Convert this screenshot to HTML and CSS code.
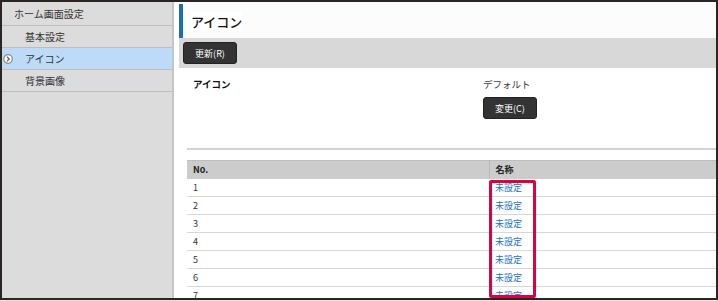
FILE: index.html
```html
<!DOCTYPE html>
<html lang="ja">
<head>
<meta charset="utf-8">
<link rel="stylesheet" href="styles.css">
</head>
<body>
<div class="frame">
  <aside class="side">
    <div class="side-head">ホーム画面設定</div>
    <div class="side-item">基本設定</div>
    <div class="side-item active">
      <svg class="side-icon" width="10" height="10" viewBox="0 0 10 10"><circle cx="5" cy="5" r="4.3" fill="#fff" stroke="#8a8a8a" stroke-width="1.2"/><path d="M4 2.8 L6.2 5 L4 7.2" fill="none" stroke="#6a6a6a" stroke-width="1.4"/></svg>
      アイコン
    </div>
    <div class="side-item">背景画像</div>
  </aside>
  <main class="main">
    <div class="title"><span class="title-text">アイコン</span></div>
    <div class="toolbar"><button class="btn">更新(R)</button></div>
    <section class="setting">
      <div class="label">アイコン</div>
      <div class="value">
        <div class="value-text">デフォルト</div>
        <button class="btn">変更(C)</button>
      </div>
    </section>
    <div class="rule"></div>
    <div class="table-wrap">
      <table class="list">
        <thead><tr><th class="c-no">No.</th><th>名称</th></tr></thead>
        <tbody>
          <tr><td>1</td><td><a>未設定</a></td></tr>
          <tr><td>2</td><td><a>未設定</a></td></tr>
          <tr><td>3</td><td><a>未設定</a></td></tr>
          <tr><td>4</td><td><a>未設定</a></td></tr>
          <tr><td>5</td><td><a>未設定</a></td></tr>
          <tr><td>6</td><td><a>未設定</a></td></tr>
          <tr><td>7</td><td><a>未設定</a></td></tr>
        </tbody>
      </table>
      <div class="highlight"></div>
    </div>
  </main>
</div>
</body>
</html>
```
FILE: styles.css
```css
* { box-sizing: border-box; }
html, body { margin: 0; padding: 0; background: #e6e3e1; }
body { font-family: "Noto Sans CJK JP", "Noto Sans", sans-serif; color: #222; }
.frame {
  width: 718px; height: 300px;
  border: 2px solid #2b2523;
  display: flex;
  overflow: hidden;
  background: #fff;
}
.side {
  width: 172px; flex: none;
  background: #dcdcdc;
  border-right: 2px solid #c6c6c6;
}
.side-head, .side-item {
  height: 22px;
  display: flex; align-items: center;
  font-size: 10px;
  color: #333;
  border-bottom: 1px solid #bdbdbd;
}
.side-head { padding-left: 12px; height: 24px; }
.side-item { padding-left: 23px; position: relative; }
.side-item.active { background: #bddbf8; }
.side-icon { position: absolute; left: 1px; top: 6px; }
.main { flex: 1; padding: 2px 0 0 5px; display: flex; flex-direction: column; min-width: 0; }
.main > * { flex: none; }
.title {
  height: 34px;
  border-left: 4px solid #1a6db5;
  background: #fcfcfc;
  display: flex; align-items: center;
  padding-left: 8px;
}
.title-text { font-size: 13px; font-weight: 500; color: #111; background: #fff; }
.toolbar {
  height: 30px;
  background: #d8d8d8;
  display: flex; align-items: center;
  padding-left: 4px;
}
.btn {
  font-family: inherit;
  font-size: 9px;
  color: #fff;
  background: #333;
  border: 1px solid #222;
  border-radius: 3px;
  width: 54px; height: 22px;
  padding: 0;
}
.setting { display: flex; padding: 9px 0 0 14px; height: 80px; line-height: 14px; }
.label { width: 290px; font-size: 9.5px; font-weight: 700; color: #111; }
.value-text { font-size: 9.5px; color: #3a3a3a; margin-bottom: 6px; }
.rule { margin-left: 8px; height: 2px; background: #d3d3d3; }
.table-wrap { position: relative; margin: 10px 0 0 8px; }
.list { width: 100%; border-collapse: collapse; font-size: 9px; }
.list th {
  background: #cccccc; height: 18px; text-align: left; padding: 0 6px;
  font-weight: 700; color: #222;
  border-top: 1px solid #bdbdbd;
}
.list th.c-no { width: 302px; border-right: 1px solid #b8b8b8; }
.list td { height: 18px; padding: 0 6px; border-bottom: 1px solid #d8d8d8; color: #333; }
.list td a { color: #1a6fd0; }
.highlight {
  position: absolute; left: 302px; top: 20px; width: 47px; height: 118px;
  border: 3px solid #e2003c; border-radius: 2px;
}
```
